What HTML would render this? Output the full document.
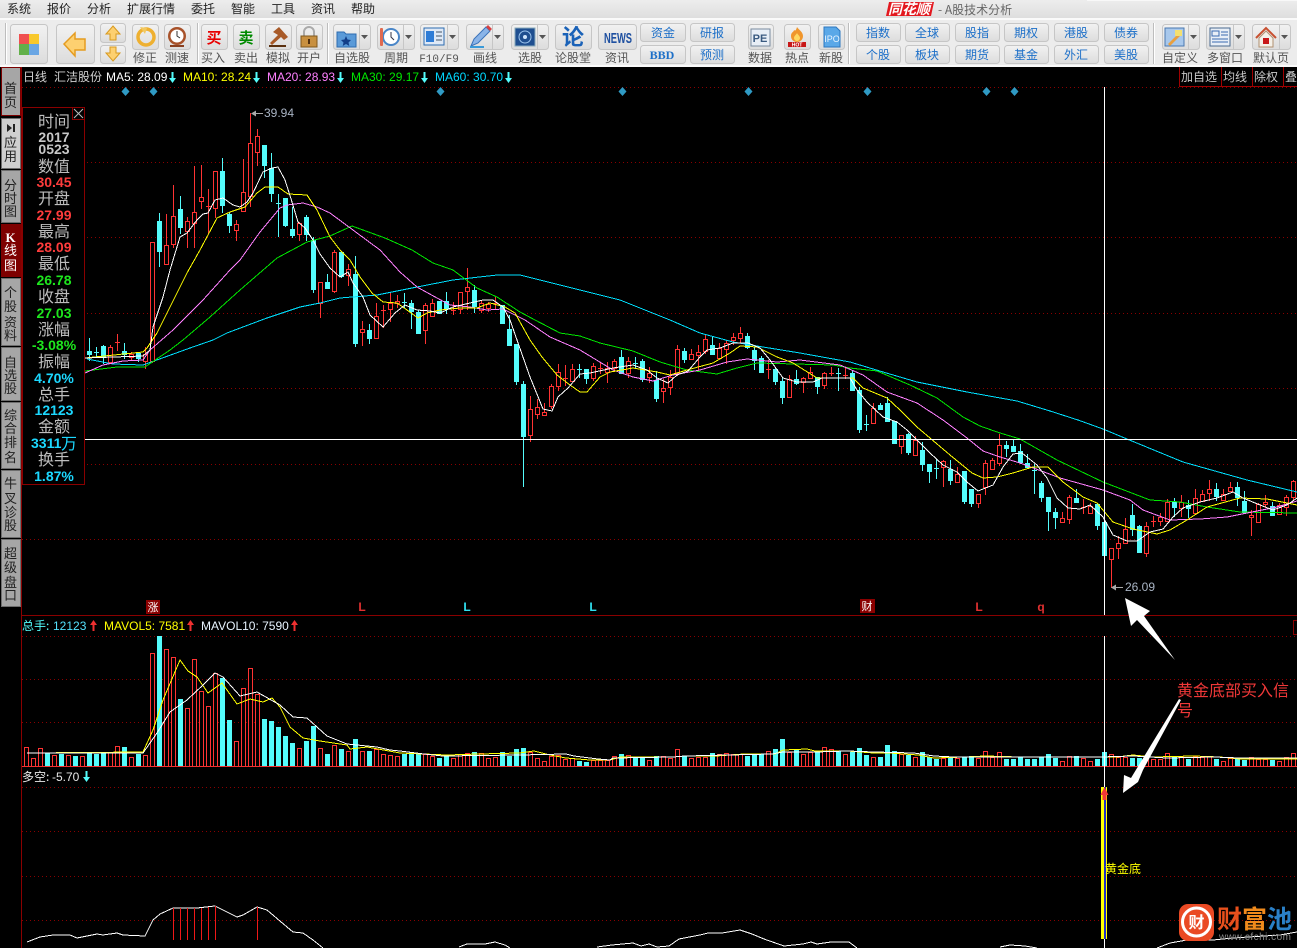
<!DOCTYPE html>
<html><head><meta charset="utf-8"><title>A股技术分析</title>
<style>
html,body{margin:0;padding:0;background:#000;width:1297px;height:948px;overflow:hidden}
svg{display:block;position:absolute;left:0;top:0}
text{font-family:"Liberation Sans","WenQuanYi Zen Hei","Noto Sans CJK SC",sans-serif}
.cn{font-family:"WenQuanYi Zen Hei","Noto Sans CJK SC",sans-serif}
.m{font-size:12px;fill:#222}
.l{font-size:12px;fill:#555;text-anchor:middle}
.b{font-size:12px;fill:#1c6fc8;text-anchor:middle}
.t{font-size:13px;fill:#222;text-anchor:middle}
.p{font-size:16px;fill:#bdbdbd;text-anchor:middle}
.n{font-size:14px;font-weight:bold;text-anchor:middle}
.h{font-size:12px}
.dot{stroke:#8a0000;stroke-width:1;stroke-dasharray:1 3;fill:none}
.ma{fill:none;stroke-width:1;shape-rendering:crispEdges}
</style></head><body>
<svg width="1297" height="948" viewBox="0 0 1297 948" xmlns="http://www.w3.org/2000/svg">
<defs>
<linearGradient id="g" x1="0" y1="0" x2="0" y2="1"><stop offset="0" stop-color="#f2f2f2"/><stop offset="1" stop-color="#dcdcdc"/></linearGradient>
<linearGradient id="mb" x1="0" y1="0" x2="0" y2="1"><stop offset="0" stop-color="#ededed"/><stop offset="1" stop-color="#dedede"/></linearGradient>
<symbol id="down" viewBox="0 0 7 11"><path d="M2.5 0h2v6H7L3.5 11 0 6h2.500z"/></symbol>
<symbol id="up" viewBox="0 0 7 11"><path d="M2.5 11h2V5H7L3.5 0 0 5h2.500z"/></symbol>
</defs>
<rect width="1297" height="948" fill="#000"/>

<!-- menu bar -->
<rect width="1297" height="18" fill="url(#mb)"/>
<rect x="1087" y="0" width="210" height="1" fill="#f8f8f8"/>
<rect y="18" width="1297" height="2" fill="#fafafa"/>
<g class="m">
<text class="m cn" x="7" y="13">系统</text><text class="m cn" x="47" y="13">报价</text><text class="m cn" x="87" y="13">分析</text><text class="m cn" x="127" y="13">扩展行情</text><text class="m cn" x="191" y="13">委托</text><text class="m cn" x="231" y="13">智能</text><text class="m cn" x="271" y="13">工具</text><text class="m cn" x="311" y="13">资讯</text><text class="m cn" x="351" y="13">帮助</text>
</g>
<path d="M889 2h45l-3 14h-45z" fill="#e3181f"/>
<text x="909" y="14" font-size="14" font-weight="bold" font-style="italic" fill="#fff" text-anchor="middle" class="cn">同花顺</text>
<text x="938" y="14" font-size="12" fill="#666" class="cn">- A股技术分析</text>

<!-- toolbar -->
<rect y="20" width="1297" height="47" fill="#ececec"/>
<rect y="65" width="1297" height="2" fill="#fafafa"/>
<g stroke="#bdbdbd" fill="none"><path d="M5.5 23V64M197.5 23V64M327.5 23V64M848.5 23V64M1153.5 23V64"/></g>
<g stroke="#fff" fill="none"><path d="M6.5 23V64M198.5 23V64M328.5 23V64M849.5 23V64M1154.5 23V64"/></g>
<g fill="url(#g)" stroke="#c6c6c6">
<rect x="10.5" y="24.5" width="37" height="39" rx="3"/><rect x="56.5" y="24.5" width="38" height="39" rx="3"/>
<rect x="100.5" y="23.5" width="25" height="19" rx="3"/><rect x="100.5" y="45.5" width="25" height="18" rx="3"/>
<rect x="132.5" y="24.5" width="26" height="25" rx="3"/><rect x="164.5" y="24.5" width="26" height="25" rx="3"/>
<rect x="201.5" y="24.5" width="26" height="25" rx="3"/><rect x="233.5" y="24.5" width="26" height="25" rx="3"/><rect x="265.5" y="24.5" width="26" height="25" rx="3"/><rect x="296.5" y="24.5" width="26" height="25" rx="3"/>
<rect x="333.5" y="24.5" width="37" height="25" rx="3"/><rect x="377.5" y="24.5" width="37" height="25" rx="3"/><rect x="420.5" y="24.5" width="38" height="25" rx="3"/><rect x="466.5" y="24.5" width="37" height="25" rx="3"/><rect x="511.5" y="24.5" width="37" height="25" rx="3"/><rect x="555.5" y="24.5" width="36" height="25" rx="3"/><rect x="598.5" y="24.5" width="38" height="25" rx="3"/>
<rect x="640.5" y="23.5" width="45" height="18" rx="3"/><rect x="640.5" y="45.5" width="45" height="18" rx="3"/><rect x="690.5" y="23.5" width="44" height="18" rx="3"/><rect x="690.5" y="45.5" width="44" height="18" rx="3"/>
<rect x="748.5" y="24.5" width="25" height="25" rx="3"/><rect x="784.5" y="24.5" width="26" height="25" rx="3"/><rect x="818.5" y="24.5" width="26" height="25" rx="3"/>
<rect x="856.5" y="23.5" width="44" height="18" rx="3"/><rect x="905.5" y="23.5" width="44" height="18" rx="3"/><rect x="955.5" y="23.5" width="44" height="18" rx="3"/><rect x="1004.5" y="23.5" width="44" height="18" rx="3"/><rect x="1054.5" y="23.5" width="44" height="18" rx="3"/><rect x="1104.5" y="23.5" width="44" height="18" rx="3"/>
<rect x="856.5" y="45.5" width="44" height="18" rx="3"/><rect x="905.5" y="45.5" width="44" height="18" rx="3"/><rect x="955.5" y="45.5" width="44" height="18" rx="3"/><rect x="1004.5" y="45.5" width="44" height="18" rx="3"/><rect x="1054.5" y="45.5" width="44" height="18" rx="3"/><rect x="1104.5" y="45.5" width="44" height="18" rx="3"/>
<rect x="1162.5" y="24.5" width="37" height="25" rx="3"/><rect x="1206.5" y="24.5" width="38" height="25" rx="3"/><rect x="1252.5" y="24.5" width="38" height="25" rx="3"/>
</g>
<!-- dropdown carets -->
<g stroke="#c6c6c6"><path d="M359.5 25V49M403.5 25V49M447.5 25V49M492.5 25V49M537.5 25V49M1188.5 25V49M1233.5 25V49M1279.5 25V49"/></g>
<g fill="#555"><path d="M361 35h7l-3.500 4zM405 35h7l-3.500 4zM449 35h7l-3.500 4zM494 35h7l-3.500 4zM539 35h7l-3.500 4zM1190 35h7l-3.500 4zM1235 35h7l-3.500 4zM1281 35h7l-3.500 4z"/></g>
<!-- icons -->
<rect x="19" y="34" width="10" height="10" fill="#f05050"/><rect x="29" y="34" width="10" height="10" fill="#f8c82c"/><rect x="19" y="44" width="10" height="11" fill="#62b04a"/><rect x="29" y="44" width="10" height="11" fill="#6aa6e4"/>
<path d="M64 44l11-11v6h10v11H75v6z" fill="#fdd070" stroke="#e59c20" stroke-width="1.500"/>
<path d="M113 26l7 8h-4v6h-6v-6h-4z" fill="#fdd070" stroke="#d89a20"/>
<path d="M113 61l7-8h-4v-6h-6v6h-4z" fill="#fdd070" stroke="#d89a20"/>
<circle cx="146" cy="37" r="8" fill="none" stroke="#eeb030" stroke-width="3.500"/><path d="M140 27l7 1-2 6z" fill="#f2c860"/>
<circle cx="177" cy="36" r="9" fill="#a8522a"/><circle cx="177" cy="36" r="6.500" fill="#fff"/><path d="M177 31v5l3 2" stroke="#333" fill="none"/><rect x="170" y="45" width="14" height="2" fill="#8a4020"/>
<text x="214" y="43" font-size="15" fill="#e80000" text-anchor="middle" class="cn" font-weight="bold">买</text>
<text x="246" y="43" font-size="15" fill="#008a00" text-anchor="middle" class="cn" font-weight="bold">卖</text>
<path d="M273 32l6-5 9 10-4 3-3-3-9 8-2-2 8-8z" fill="#a85a28"/><rect x="269" y="45" width="17" height="2" fill="#5a3010"/>
<path d="M304 36v-4a5 5 0 0 1 10 0v4" fill="none" stroke="#aaa" stroke-width="2"/><rect x="301" y="36" width="16" height="11" fill="#c89040" stroke="#80581c"/><rect x="308" y="39" width="2" height="5" fill="#503010"/>
<path d="M337 32h7l2 2h10v13h-19z" fill="#5a9ad8" stroke="#2d6cb0"/><path d="M346 36l1.500 3.500 3.500.500-2.500 2.500.800 3.500-3.300-2-3.300 2 .800-3.500-2.500-2.500 3.500-.500z" fill="#123e88"/>
<circle cx="391" cy="37" r="8" fill="#fff" stroke="#4a86c8" stroke-width="2"/><path d="M391 32v5l3 3" stroke="#334" fill="none"/><rect x="380" y="28" width="3" height="18" fill="#e06a50" rx="1"/>
<rect x="424" y="28" width="20" height="17" fill="#dfe9f6" stroke="#2d6cb0"/><rect x="426" y="31" width="8" height="11" fill="#2e7cd6"/><path d="M436 32h6M436 36h6M436 40h6" stroke="#456"/>
<path d="M471 46l3-7 12-12 4 4-12 12z" fill="#8ab4e8" stroke="#3a72b8"/><path d="M470 47h14" stroke="#3a9ad8" stroke-width="2"/><path d="M486 27l4 4 2-2-4-4z" fill="#d84040"/>
<rect x="515" y="28" width="20" height="18" fill="#1f4f90" stroke="#8ab"/><circle cx="525" cy="37" r="6" fill="none" stroke="#9cc4ee"/><circle cx="525" cy="37" r="2" fill="#cfe4fa"/>
<text x="573" y="45" font-size="22" font-weight="bold" fill="#1a62b8" text-anchor="middle" class="cn">论</text>
<text x="618" y="43" font-size="15" font-weight="bold" fill="#1d4fa0" text-anchor="middle" textLength="28" lengthAdjust="spacingAndGlyphs">NEWS</text>
<text x="663" y="37" class="b cn">资金</text><text x="662" y="59" font-size="12" font-weight="bold" fill="#1c6fc8" text-anchor="middle" style="font-family:'Liberation Serif',serif">BBD</text>
<text x="712" y="37" class="b cn">研报</text><text x="712" y="59" class="b cn">预测</text>
<rect x="751" y="29" width="19" height="17" fill="#e8eef6" stroke="#7a8ca0"/><text x="760" y="42" font-size="11" font-weight="bold" fill="#3a5a80" text-anchor="middle">PE</text>
<path d="M797 27c2 3 6 5 6 9s-3 6-6 6-6-2-6-6 3-4 3-6c1 1 2 1 3-3z" fill="#f0962c"/><path d="M797 33c1 2 3 3 3 5a3 3 0 0 1-6 0c0-2 2-3 3-5z" fill="#ffd860"/><rect x="788" y="42" width="18" height="5" fill="#c81818"/><text x="797" y="46.500" font-size="5" font-weight="bold" fill="#fff" text-anchor="middle">HOT</text>
<path d="M824 27h12l4 4v16h-16z" fill="#5aa8e8" stroke="#2d78c0"/><text x="832" y="42" font-size="9" fill="#e8f4ff" text-anchor="middle">IPO</text>
<g class="b"><text class="b cn" x="878" y="37">指数</text><text class="b cn" x="927" y="37">全球</text><text class="b cn" x="977" y="37">股指</text><text class="b cn" x="1026" y="37">期权</text><text class="b cn" x="1076" y="37">港股</text><text class="b cn" x="1126" y="37">债券</text>
<text class="b cn" x="878" y="59">个股</text><text class="b cn" x="927" y="59">板块</text><text class="b cn" x="977" y="59">期货</text><text class="b cn" x="1026" y="59">基金</text><text class="b cn" x="1076" y="59">外汇</text><text class="b cn" x="1126" y="59">美股</text></g>
<rect x="1165" y="28" width="19" height="18" fill="#a8c8ec" stroke="#4a78b0"/><path d="M1168 44l12-12 2 2-12 12z" fill="#e8a040"/><rect x="1175" y="30" width="7" height="6" fill="#f4e070"/>
<rect x="1210" y="28" width="20" height="18" fill="#e8eef6" stroke="#4a6a90"/><path d="M1212 31h7v5h-7zM1221 32h7M1221 35h7M1212 39h16M1212 42h16" stroke="#3a6ab0" fill="none"/>
<path d="M1256 38l10-10 10 10" stroke="#c85030" stroke-width="2" fill="none"/><path d="M1259 38v9h14v-9l-7-7z" fill="#f4f0e8" stroke="#b09070"/><rect x="1263" y="38" width="6" height="6" fill="#c81818"/>
<g>
<text class="l cn" x="145" y="62">修正</text><text class="l cn" x="177" y="62">测速</text><text class="l cn" x="213" y="62">买入</text><text class="l cn" x="246" y="62">卖出</text><text class="l cn" x="278" y="62">模拟</text><text class="l cn" x="309" y="62">开户</text><text class="l cn" x="352" y="62">自选股</text><text class="l cn" x="396" y="62">周期</text><text x="439" y="62" font-size="11" fill="#555" text-anchor="middle" style="font-family:'Liberation Mono',monospace">F10/F9</text><text class="l cn" x="485" y="62">画线</text><text class="l cn" x="530" y="62">选股</text><text class="l cn" x="573" y="62">论股堂</text><text class="l cn" x="617" y="62">资讯</text><text class="l cn" x="760" y="62">数据</text><text class="l cn" x="797" y="62">热点</text><text class="l cn" x="831" y="62">新股</text><text class="l cn" x="1180" y="62">自定义</text><text class="l cn" x="1225" y="62">多窗口</text><text class="l cn" x="1271" y="62">默认页</text>
</g>

<!-- left tabs -->
<g fill="#a6a6a6" stroke="#6e6e6e">
<rect x="1.500" y="67.500" width="19" height="48" stroke="#7a0000" stroke-width="1"/>
<rect x="1.500" y="118.500" width="19" height="50" fill="#cfcfcf"/>
<rect x="1.500" y="170.500" width="19" height="52"/>
<rect x="1.500" y="224.500" width="19" height="52" fill="#7e0000" stroke="#7e0000"/>
<rect x="1.500" y="278.500" width="19" height="67"/>
<rect x="1.500" y="347.500" width="19" height="53"/>
<rect x="1.500" y="402.500" width="19" height="66"/>
<rect x="1.500" y="470.500" width="19" height="67"/>
<rect x="1.500" y="539.500" width="19" height="67"/>
</g>
<g>
<text class="t cn" x="10.500" y="93">首</text><text class="t cn" x="10.500" y="107">页</text>
<path d="M7 124l5 4-5 4zM13 124h2v8h-2z" fill="#222"/><text class="t cn" x="10.500" y="147">应</text><text class="t cn" x="10.500" y="161">用</text>
<text class="t cn" x="10.500" y="190">分</text><text class="t cn" x="10.500" y="203">时</text><text class="t cn" x="10.500" y="216">图</text>
<text x="10.500" y="242" font-size="13" font-weight="bold" fill="#fff" text-anchor="middle" style="font-family:'Liberation Serif',serif">K</text><text class="t cn" x="10.500" y="255" style="fill:#fff">线</text><text class="t cn" x="10.500" y="270" style="fill:#fff">图</text>
<text class="t cn" x="10.500" y="297">个</text><text class="t cn" x="10.500" y="311">股</text><text class="t cn" x="10.500" y="327">资</text><text class="t cn" x="10.500" y="340">料</text>
<text class="t cn" x="10.500" y="367">自</text><text class="t cn" x="10.500" y="380">选</text><text class="t cn" x="10.500" y="393">股</text>
<text class="t cn" x="10.500" y="420">综</text><text class="t cn" x="10.500" y="433">合</text><text class="t cn" x="10.500" y="447">排</text><text class="t cn" x="10.500" y="462">名</text>
<text class="t cn" x="10.500" y="488">牛</text><text class="t cn" x="10.500" y="503">叉</text><text class="t cn" x="10.500" y="517">诊</text><text class="t cn" x="10.500" y="530">股</text>
<text class="t cn" x="10.500" y="558">超</text><text class="t cn" x="10.500" y="572">级</text><text class="t cn" x="10.500" y="587">盘</text><text class="t cn" x="10.500" y="600">口</text>
</g>

<!-- frame + grid -->
<path d="M21.500 67V948M22 615.500H1297" stroke="#8a0000" fill="none" shape-rendering="crispEdges"/>
<g shape-rendering="crispEdges">
<path class="dot" d="M22 87.500H1297M87 162.500H1297M87 237.500H1297M87 313.500H1297M87 388.500H1297M87 464.500H1297M22 539.500H1297M22 636.500H1297M22 679.500H1297M22 722.500H1297M22 787.500H1297M22 831.500H1297M22 876.500H1297M22 920.500H1297"/>
</g>

<!-- diamonds -->
<g fill="#2f9ac4"><path d="M125.500 87l4 4.500-4 4.500-4-4.500zM153.500 87l4 4.500-4 4.500-4-4.500zM440.500 87l4 4.500-4 4.500-4-4.500zM622.500 87l4 4.500-4 4.500-4-4.500zM748.500 87l4 4.500-4 4.500-4-4.500zM867.500 87l4 4.500-4 4.500-4-4.500zM986.500 87l4 4.500-4 4.500-4-4.500zM1014.500 87l4 4.500-4 4.500-4-4.500z"/></g>

<g id="candles" shape-rendering="crispEdges"></g>

<!-- MA lines -->
<polyline class="ma" stroke="#00e0ff" points="87,359 113,364 143,365 190,348 213,340 227,333 267,318 300,307 320,303 340,298 377,295 417,287 453,280 497,275 520,275 560,285 620,300 670,320 700,333 733,342 763,347 800,353 850,362 883,372 917,382 967,392 1017,401 1050,411 1078,420 1103,429 1127,439 1183,462 1247,480 1297,492"/>
<polyline class="ma" stroke="#00e600" points="85,371 117,367 145,367 170,350 183,340 210,317 240,290 277,258 307,242 330,236 352,226 385,238 412,250 433,263 453,270 477,288 497,297 520,312 535,320 560,333 580,336 600,343 633,351 660,362 687,370 717,374 737,368 757,363 833,365 850,368 877,371 910,385 937,398 963,417 980,426 1000,433 1020,439 1057,460 1103,482 1150,500 1180,502 1207,507 1240,512 1297,513"/>
<polyline class="ma" stroke="#ff80ff" points="85,373 103,365 123,361 143,360 150,350 173,330 203,300 230,270 240,260 260,232 280,208 287,205 303,203 317,207 330,213 380,250 400,272 417,287 437,298 450,305 470,307 487,310 503,309 525,320 550,337 580,350 613,370 633,377 653,381 673,375 700,370 727,362 747,359 777,362 800,360 840,365 863,375 887,392 917,403 943,420 967,438 983,451 1000,457 1020,463 1060,478 1103,490 1130,500 1143,510 1170,520 1200,519 1227,517 1247,513 1277,507 1297,501"/>
<polyline class="ma" stroke="#ffff00" points="85,358 143,352 147,348 157,333 170,307 187,273 200,250 217,218 230,212 245,207 257,193 265,187 278,187 288,194 307,195 317,210 330,237 340,250 350,260 360,277 372,293 383,302 397,303 407,310 418,318 427,313 440,310 460,308 477,308 490,303 505,307 515,313 530,340 542,357 557,375 570,385 580,392 587,392 600,377 610,372 633,368 657,372 670,375 687,370 713,363 730,353 740,346 757,347 777,357 793,363 817,378 853,378 863,388 887,398 900,410 917,427 930,438 950,455 972,473 983,478 997,477 1013,473 1033,467 1048,467 1063,482 1083,497 1097,503 1113,522 1133,529 1157,534 1170,530 1187,520 1207,507 1240,498 1267,499 1297,505"/>
<polyline class="ma" stroke="#ffffff" points="85,358 143,356 150,350 153,327 163,297 170,270 180,237 187,233 197,220 203,214 208,213 215,200 223,198 233,205 240,207 247,202 253,193 263,172 272,168 278,167 285,180 292,202 298,222 305,228 313,240 320,254 330,268 340,277 348,272 353,283 363,297 370,315 383,327 395,313 405,305 417,310 430,311 440,313 453,307 470,303 483,300 493,300 503,307 510,320 517,340 530,377 543,409 552,411 558,397 568,388 580,374 590,373 613,368 633,365 647,370 657,378 668,383 677,375 688,371 700,357 707,350 720,348 733,343 748,343 760,348 770,360 783,378 797,382 813,382 822,378 850,378 857,390 867,402 883,417 897,422 907,430 917,440 930,453 943,465 957,472 967,482 978,491 993,485 1003,467 1013,454 1022,453 1037,465 1047,478 1057,498 1068,508 1080,509 1090,505 1103,517 1113,535 1127,541 1137,541 1150,532 1163,529 1173,517 1183,508 1200,502 1217,498 1233,492 1243,498 1260,505 1273,510 1287,505 1297,498"/>

<!-- extreme labels -->
<path d="M252 113.500H263" stroke="#aaa"/><path d="M251 113.500l5-3v6z" fill="#aaa"/><text x="264" y="117" font-size="12" fill="#a9b4c4">39.94</text>
<path d="M1112 587.500H1123" stroke="#aaa"/><path d="M1111 587.500l5-3v6z" fill="#aaa"/><text x="1125" y="591" font-size="12" fill="#a9b4c4">26.09</text>

<!-- bottom markers -->
<rect x="146" y="600" width="14" height="14" fill="#8a0000"/><text x="153" y="611" font-size="11" fill="#fff" text-anchor="middle" class="cn">涨</text>
<text x="362" y="611" font-size="12" font-weight="bold" fill="#e03030" text-anchor="middle">L</text>
<text x="467" y="611" font-size="12" font-weight="bold" fill="#30e0f0" text-anchor="middle">L</text>
<text x="593" y="611" font-size="12" font-weight="bold" fill="#30e0f0" text-anchor="middle">L</text>
<rect x="860" y="599" width="15" height="14" fill="#8a0000"/><text x="867" y="610" font-size="11" fill="#fff" text-anchor="middle" class="cn">财</text>
<text x="979" y="611" font-size="12" font-weight="bold" fill="#e03030" text-anchor="middle">L</text>
<text x="1041" y="611" font-size="12" font-weight="bold" fill="#e03030" text-anchor="middle">q</text>

<!-- volume -->
<g id="vol" shape-rendering="crispEdges"></g>
<polyline class="ma" stroke="#ffff00" points="27,753 143,752 153,730 163,700 180,660 188,671 197,677 208,693 222,683 237,704 250,699 263,702 272,698 280,707 290,727 303,738 320,741 347,745 350,749 367,747 400,753 447,755 479,754 519,753 534,751 550,755 566,758 590,760 610,760 621,757 673,757 685,756 716,756 744,754 775,754 783,750 807,749 815,751 847,751 874,753 890,753 918,755 934,758 965,757 985,756 1020,757 1117,757 1133,755 1153,757 1193,756 1220,757 1240,759 1297,759"/>
<polyline class="ma" stroke="#ffffff" points="27,753 143,753 157,733 170,712 187,700 203,685 215,673 223,677 240,696 257,692 280,705 293,717 307,718 327,736 347,744 377,747 390,750 400,751 424,754 443,756 519,755 566,754 574,756 598,759 610,760 613,758 673,757 685,756 772,754 783,752 815,752 847,751 874,752 914,753 934,756 954,757 981,757 1000,757 1100,757 1133,756 1167,758 1213,757 1240,758 1297,758"/>
<path d="M22 766.500H1297" stroke="#f03030" shape-rendering="crispEdges"/>
<rect x="1293.500" y="620.500" width="6" height="14" fill="none" stroke="#8a0000"/>

<!-- bottom indicator -->
<polyline class="ma" stroke="#ffffff" points="27,942 40,937 53,935 70,935 77,938 97,934 103,935 117,933 123,935 145,936 153,920 160,914 173,908 197,908 215,906 227,912 237,917 243,915 257,907 267,910 287,927 293,932 303,933 313,940 323,948"/>
<polyline class="ma" stroke="#ffffff" points="459,947 467,944 485,944 495,942 505,945 510,948"/>
<polyline class="ma" stroke="#ffffff" points="597,947 612,945 633,943 641,946 649,944 657,947 669,946 679,939 700,935 708,933 722,933 740,930 752,934 764,939 784,946 803,944 811,942 817,944 831,942 849,942 857,948"/>
<polyline class="ma" stroke="#ffffff" points="1000,947 1010,945 1025,946 1037,948"/>
<polyline class="ma" stroke="#ffffff" points="1157,948 1170,943 1187,940 1213,940 1233,938 1280,935 1297,932"/>
<path d="M173.500 908V940M180.500 908V940M187.500 908V940M194.500 908V940M201.500 908V940M208.500 907V940M215.500 906V940M257.500 907V940" stroke="#f01818" shape-rendering="crispEdges"/>

<!-- crosshair -->
<path d="M1104.500 87V615M1104.500 636V948M85 439.500H1297" stroke="#fff" shape-rendering="crispEdges"/>
<rect x="1101" y="787" width="6" height="152" fill="#ffff00"/><rect x="1104" y="787" width="2" height="152" fill="#2030c0"/>
<path d="M1104.500 787l4 8h-2v5h-4v-5h-2z" fill="#f03838"/>
<text x="1105" y="873" font-size="12" fill="#ffff00" class="cn">黄金底</text>

<!-- info panel -->
<rect x="22.500" y="107.500" width="62" height="377" fill="#000" stroke="#8a0000"/>
<rect x="72.500" y="107.500" width="12" height="12" fill="#000" stroke="#8a0000"/><path d="M74 109l9 9M83 109l-9 9" stroke="#bbb"/>
<g>
<text class="p cn" x="54" y="127">时间</text>
<text class="n" x="54" y="142" fill="#c8c8c8">2017</text><text class="n" x="54" y="154" fill="#c8c8c8">0523</text>
<text class="p cn" x="54" y="172">数值</text><text class="n" x="54" y="187" fill="#ff3c3c">30.45</text>
<text class="p cn" x="54" y="204">开盘</text><text class="n" x="54" y="220" fill="#ff3c3c">27.99</text>
<text class="p cn" x="54" y="237">最高</text><text class="n" x="54" y="252" fill="#ff3c3c">28.09</text>
<text class="p cn" x="54" y="269">最低</text><text class="n" x="54" y="285" fill="#1ee61e">26.78</text>
<text class="p cn" x="54" y="302">收盘</text><text class="n" x="54" y="318" fill="#1ee61e">27.03</text>
<text class="p cn" x="54" y="335">涨幅</text><text class="n" x="54" y="350" fill="#1ee61e">-3.08%</text>
<text class="p cn" x="54" y="367">振幅</text><text class="n" x="54" y="383" fill="#1cd8ff">4.70%</text>
<text class="p cn" x="54" y="400">总手</text><text class="n" x="54" y="415" fill="#1cd8ff">12123</text>
<text class="p cn" x="54" y="432">金额</text><text x="31" y="448" font-size="14" font-weight="bold" fill="#1cd8ff">3311</text><text x="61" y="449" font-size="16" fill="#1cd8ff" class="cn">万</text>
<text class="p cn" x="54" y="465">换手</text><text class="n" x="54" y="481" fill="#1cd8ff">1.87%</text>
</g>

<!-- chart header -->
<text class="h cn" x="23" y="81" fill="#cfcfcf" font-size="12">日线</text><text class="h cn" x="54" y="81" fill="#cfcfcf">汇洁股份</text>
<text class="h" x="106" y="81" fill="#fff">MA5: 28.09</text><use href="#down" x="169" y="72" width="7" height="11" fill="#54fcfc"/>
<text class="h" x="183" y="81" fill="#ffff00">MA10: 28.24</text><use href="#down" x="253" y="72" width="7" height="11" fill="#54fcfc"/>
<text class="h" x="267" y="81" fill="#ff80ff">MA20: 28.93</text><use href="#down" x="337" y="72" width="7" height="11" fill="#54fcfc"/>
<text class="h" x="351" y="81" fill="#00e600">MA30: 29.17</text><use href="#down" x="421" y="72" width="7" height="11" fill="#54fcfc"/>
<text class="h" x="435" y="81" fill="#00d8ff">MA60: 30.70</text><use href="#down" x="505" y="72" width="7" height="11" fill="#54fcfc"/>
<!-- right header buttons -->
<path d="M1179.500 67V86.500H1297M1221.500 67V86M1252.500 67V86M1283.500 67V86" stroke="#a00000" fill="none" shape-rendering="crispEdges"/>
<g><text class="cn" x="1181" y="81" font-size="12" fill="#c8c8c8">加自选</text><text class="cn" x="1223" y="81" font-size="12" fill="#c8c8c8">均线</text><text class="cn" x="1254" y="81" font-size="12" fill="#c8c8c8">除权</text><text class="cn" x="1285" y="81" font-size="12" fill="#c8c8c8">叠</text></g>

<!-- volume / indicator headers -->
<text class="h cn" x="22" y="630" fill="#54fcfc">总手:</text><text class="h" x="53" y="630" fill="#54e0fc">12123</text><use href="#up" x="90" y="620" width="7" height="11" fill="#f03030"/>
<text class="h" x="104" y="630" fill="#ffff00">MAVOL5: 7581</text><use href="#up" x="187" y="620" width="7" height="11" fill="#f03030"/>
<text class="h" x="201" y="630" fill="#e8f4ff">MAVOL10: 7590</text><use href="#up" x="291" y="620" width="7" height="11" fill="#f03030"/>
<text class="h cn" x="22" y="781" fill="#e8e8e8">多空:</text><text class="h" x="52" y="781" fill="#e8e8e8">-5.70</text><use href="#down" x="83" y="771" width="7" height="11" fill="#54fcfc"/>

<!-- annotations -->
<polygon points="1125,598 1150,611 1144,616 1175,660 1137,620 1131,626" fill="#fff"/>
<polygon points="1123,793 1124,775 1131,778 1179,699 1181,700 1143,770 1138,782" fill="#fff"/>
<text x="1177" y="696" font-size="16" fill="#f03838" class="cn">黄金底部买入信</text>
<text x="1177" y="716" font-size="16" fill="#f03838" class="cn">号</text>

<!-- watermark -->
<rect x="1179" y="904" width="35" height="37" rx="9" fill="#ea4a24"/>
<circle cx="1196.500" cy="922" r="14" fill="none" stroke="#fff" stroke-width="3"/>
<text x="1196.500" y="928" font-size="16" font-weight="bold" fill="#fff" text-anchor="middle" class="cn">财</text>
<text x="1217" y="928" font-size="25" font-weight="bold" fill="#e8501c" class="cn">财</text>
<text x="1242" y="928" font-size="25" font-weight="bold" fill="#f08a1c" class="cn">富</text>
<text x="1267" y="928" font-size="25" font-weight="bold" fill="#2a80c8" class="cn">池</text>
<text x="1219" y="940" font-size="10" fill="#8a8a8a" textLength="72">www.cfchi.com</text>
</svg>
<script>
(function(){
var C='#54fcfc',R='#ff3333',NS='http://www.w3.org/2000/svg';
function rect(g,x,y,w,h,f,s){var e=document.createElementNS(NS,'rect');e.setAttribute('x',x);e.setAttribute('y',y);e.setAttribute('width',w);e.setAttribute('height',h);e.setAttribute('fill',f);if(s)e.setAttribute('stroke',s);g.appendChild(e);}
var d="89C338,351,354,360;96C347,352,352,357;103C345,346,356,363;110R345,347,362,363;117R334,342,342,350;124C343,351,354,358;131R352,354,357,359;138C352,353,358,361;145R347,354,361,368;152R242,242,361,362;159C213,221,251,266;166R214,245,264,264;173R185,216,244,247;180C196,209,227,233;187R217,221,231,247;194R166,212,223,247;201R165,197,201,208;208R189,206,206,233;215R171,171,208,217;222C158,171,205,212;229C212,214,225,232;236R220,224,230,240;243R159,192,211,211;250R113,143,196,206;257R129,136,152,165;264C145,145,165,177;271C153,168,193,201;278C194,203,203,236;285C198,198,225,226;292C207,229,235,237;299R222,223,234,240;306C215,217,234,240;313C237,240,289,292;320R282,282,303,317;327C274,282,288,288;334R250,252,291,292;341C252,252,276,277;348R264,269,275,285;355C256,274,343,346;362R321,329,332,345;369C324,330,338,343;376R303,316,338,338;383R305,310,310,327;390R292,303,309,321;397R295,301,303,307;404C293,302,302,307;411C300,303,311,328;418C310,312,333,333;425R303,305,330,343;432R299,303,316,316;439C301,301,313,313;446C292,301,308,313;453R302,310,310,314;460R292,292,309,313;467R268,287,291,309;474C285,290,306,312;481R301,303,310,312;488R302,304,308,311;495R297,303,303,308;502C305,305,323,323;509C315,329,345,345;516C344,344,381,384;523C381,384,436,486;530R396,409,435,441;537R399,407,414,418;544R403,412,415,415;551R384,386,406,408;558R364,372,386,390;565R365,378,378,385;572R364,369,381,381;579C364,369,369,377;586C369,369,378,383;593R363,366,378,380;600R362,368,368,373;607R362,368,372,382;614R359,361,368,371;621C350,357,373,373;628R357,361,373,377;635C357,363,363,368;642C359,361,379,381;649R367,373,377,382;656C371,380,398,401;663R379,388,391,402;670R370,377,387,394;677R345,349,373,375;684C348,351,359,362;691R349,354,359,359;698R345,352,355,370;705R335,339,351,353;712C336,345,354,354;719R343,348,358,358;726R340,343,349,363;733R333,337,340,344;740R327,333,338,342;747C333,336,347,348;754C347,350,360,369;761C356,358,372,372;768R360,369,369,378;775C367,369,381,384;782C377,381,397,403;789R375,379,397,397;796C370,379,383,384;803R377,378,382,392;810R367,372,378,378;817C377,377,386,393;824R372,373,385,388;831R367,373,373,375;838C368,373,373,390;845R368,375,375,378;852C370,373,390,390;859C387,390,429,432;866C415,424,424,430;873R403,408,423,423;880C403,405,409,409;887C397,403,421,421;894C421,421,443,443;901R435,435,446,453;908C433,434,452,454;915R436,440,455,455;922C442,450,464,470;929C464,464,471,482;936C459,468,468,478;943R460,461,467,486;950C460,469,480,484;957R467,474,482,482;964C471,471,501,503;971C489,489,503,506;978R494,494,503,507;985R460,463,487,494;992R458,460,469,469;999R434,445,463,465;1006C441,445,448,456;1013C440,446,451,451;1020C444,451,462,463;1027C454,463,467,467;1034C464,470,470,493;1041C481,483,497,501;1048C497,497,511,530;1055C508,512,517,528;1062R512,518,522,522;1069R495,497,519,523;1076C489,498,502,502;1083R499,507,507,513;1090R503,506,513,513;1097C503,504,525,529;1104C519,522,555,563;1111R548,548,559,587;1118R536,543,548,558;1125R518,529,543,543;1132C504,515,529,535;1139C525,526,552,552;1146R522,526,553,556;1153R516,521,521,526;1160R513,517,521,525;1167R499,502,521,521;1174C498,502,507,516;1181R495,502,508,516;1188C500,505,508,517;1195R489,498,513,513;1202R490,494,501,501;1209R480,489,493,500;1216C483,489,496,500;1223R489,494,500,500;1230R482,487,491,491;1237C482,487,497,505;1244C491,501,512,512;1251R510,515,517,535;1258R503,504,522,522;1265R495,502,504,507;1272C502,506,515,515;1279R503,505,514,514;1286R495,497,507,515;1293R480,481,497,500";
var g=document.getElementById('candles');
d.split(';').forEach(function(s){
 var m=s.match(/^(\d+)([CR])(\d+),(\d+),(\d+),(\d+)$/);if(!m)return;
 var x=+m[1],col=m[2]=='C'?C:R,wt=+m[3],bt=+m[4],bb=+m[5],wb=+m[6];
 rect(g,x,wt,1,wb-wt+1,col);
 if(bb-bt<2){rect(g,x-2,bt,5,1,col);}
 else if(m[2]=='C'){rect(g,x-2,bt,5,bb-bt+1,col);}
 else{rect(g,x-1.5,bt+.5,4,bb-bt,'#000',col);}
});
var v=document.getElementById('vol'),B=766;
function bar(x,c,t){t=Math.round(t);if(c=='C')rect(v,x-2,t,5,B-t,C);else rect(v,x-1.5,t+.5,4,B-t,'#000',R);}
"26R747 33R758 40R748 47C753 54R755 61C754 68R755 75C756 82R756 89C752 96C754 103C752 110R752 117R746 124C747 131R757 138C754 145R755 152R653 159C636 166R649 173R657 180C699 187R708 194R659 201R691 208R706 215R673 222C678 229C720 236R741 243R688 250R668 257R694 264C719 271C721 278C727 285C736 292C743 299R748 306C741 313C726 320R748 327C754 334R745 341C749 348R751 355C739 362R751 369C751 376R749 383R754 390R755 397R756".split(' ').forEach(function(s){var m=s.match(/(\d+)([CR])(\d+)/);bar(+m[1],m[2],+m[3]);});
var x=404;
"C58 C50 C57 R58 R63 C68 C62 R68 R58 R55 C52 R55 R69 R67 C52 C62 C42 C40 R52 R70 R78 R62 R60 R72 R70 C78 C82 R75 R76 R76 R64 C57 R60 C68 C65 R75 C64 R64 R68 R42 C62 R70 R65 R65 C55 R58 R55 R58 R58 C62 C58 C58 R49 C42 C12 R50 C45 R57 R50 C52 R37 R43 C47 R57 C50 C40 C60 R67 C66 C30 C48 R58 C60 R66 C50 C65 C72 R68 C68 R68 C65 C64 R70 R49 R65 R52 C72 C72".split(' ').forEach(function(s){bar(x,s[0],735+(+s.slice(1))/3);x+=7;});
"1006C759 1013C759 1020C757 1027C759 1034C759 1041C757 1048C754 1055C758 1062R761 1069R756 1076C756 1083R758 1090R761 1097C759 1104C752 1111R754 1118R757 1125R757 1132C758 1139C758 1146R757 1153R759 1160R759 1167R753 1174C757 1181R756 1188C759 1195R756 1202R757 1209R756 1216C759 1223R761 1230R758 1237C759 1244C760 1251R757 1258R759 1265R759 1272C760 1279R761 1286R757 1293R753".split(' ').forEach(function(s){var m=s.match(/(\d+)([CR])(\d+)/);if(+m[1]>x-7)bar(+m[1],m[2],+m[3]);});
})();
</script>
</body></html>
